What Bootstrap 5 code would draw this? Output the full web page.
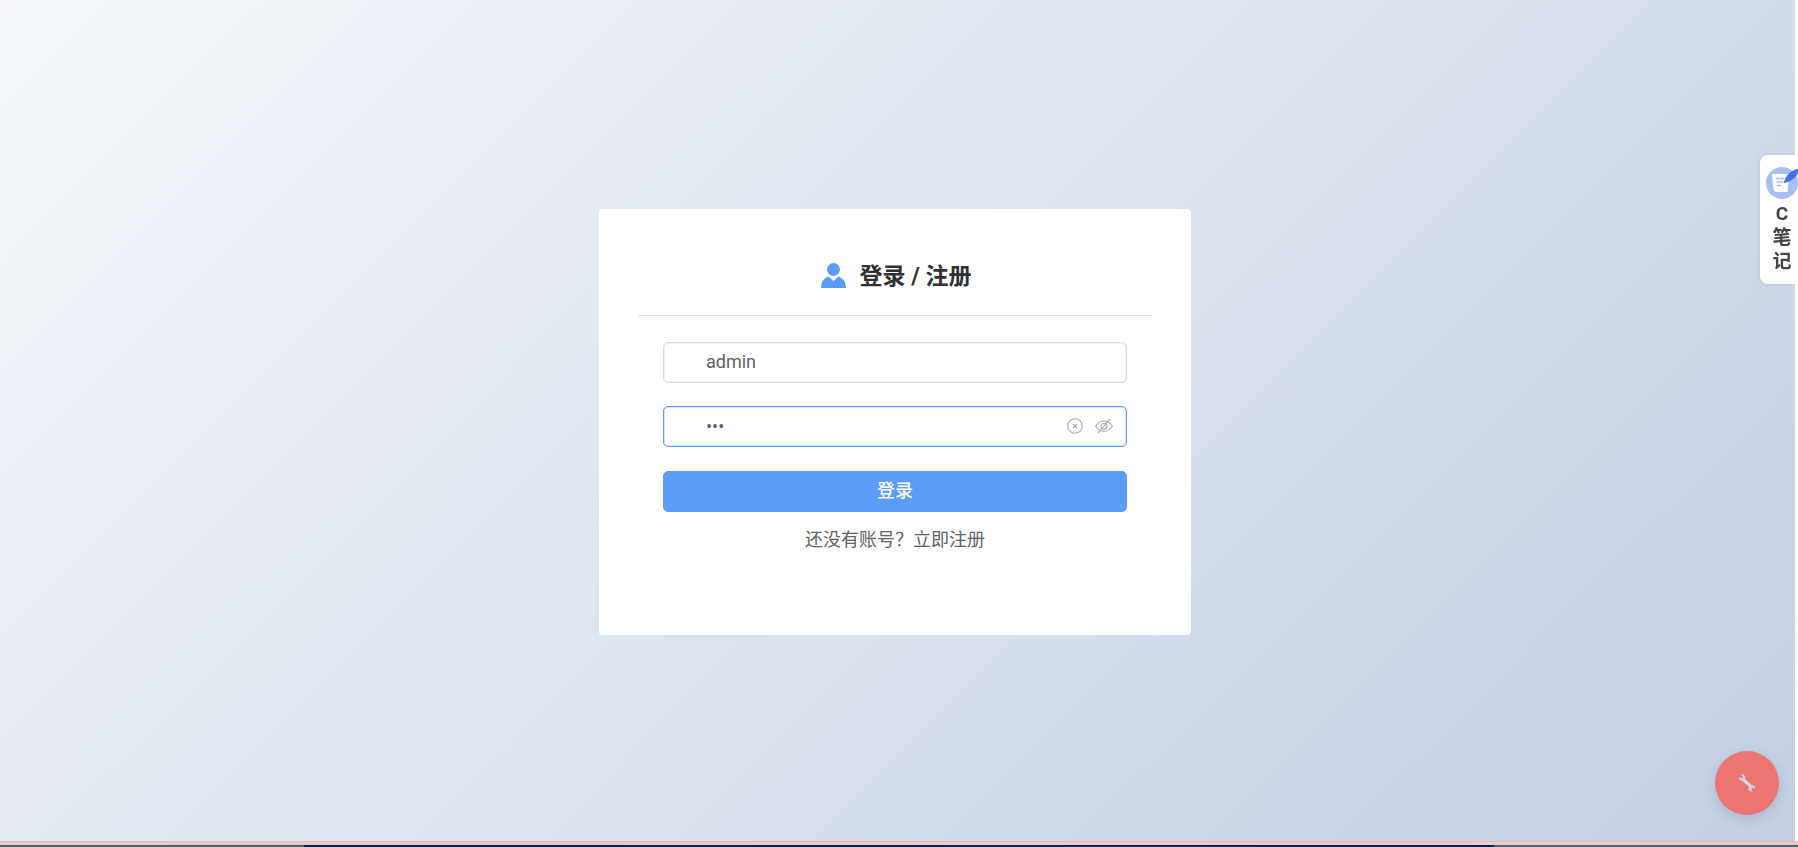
<!DOCTYPE html>
<html lang="zh-CN">
<head>
    <meta charset="UTF-8">
    <meta name="viewport" content="width=device-width, initial-scale=1.0">
    <title>登录 / 注册</title>
    <link href="https://cdn.jsdelivr.net/npm/bootstrap@5.3.0/dist/css/bootstrap.min.css" rel="stylesheet">
    <style>
        html, body {
            height: 100%;
            overflow: hidden;
        }
        body {
            font-family: Roboto, "Noto Sans CJK SC", sans-serif;
            background-color: #fff;
        }
        .page-shell {
            height: 847px;
        }
        .stage {
            height: 841px;
            margin-right: 3px;
            background: linear-gradient(135deg, #f5f7fa 0%, #c3cfe2 100%);
            padding-right: 5px;
            padding-top: 2px;
        }
        .login-box {
            width: 592px;
            height: 426px;
            border-radius: 4px;
            padding: 0 39px;
        }
        .login-title {
            gap: 14px;
            height: 107px;
            padding: 28px 0 0 2px;
            border-bottom: 1px solid #e2e3e8;
            color: #303133;
            font-size: 23px;
            font-weight: 700;
        }
        .user-icon {
            width: 25px;
            height: 25px;
        }
        .login-form {
            width: 464px;
            padding-top: 26px;
        }
        .field {
            height: 41px;
            margin-bottom: 23px;
            padding: 0 13px 0 42px;
            border: 1px solid #d9dbe3;
            border-radius: 5px;
            box-shadow: inset 0 0 0 1px rgba(220, 223, 230, .4);
        }
        .field-active {
            gap: 12px;
            margin-bottom: 24px;
            border-color: #5b9cf8;
            box-shadow: inset 0 0 0 1px rgba(91, 156, 248, .25);
        }
        .field .form-control {
            padding: 0;
            color: #606266;
            font-size: 18px;
            box-shadow: none;
            background: none;
        }
        .field .text-value {
            padding-bottom: 2px;
        }
        .clear-icon {
            flex: none;
            width: 16px;
            height: 16px;
            color: #a9a9ae;
        }
        .eye-icon {
            flex: none;
            width: 18px;
            height: 16px;
            color: #a9a9ae;
        }
        .submit-btn {
            height: 41px;
            padding: 0 0 2px;
            background-color: #5b9cf8;
            border-color: #5b9cf8;
            border-radius: 5px;
            font-size: 18px;
            font-weight: 500;
        }
        .register-link {
            margin-top: 14px;
            color: #606266;
            font-size: 18px;
            line-height: 27px;
        }
        .bottom-tint {
            height: 4px;
            background-color: #edcaca;
            border-top: 1px solid #e5b8b8;
        }
        .bottom-dark {
            height: 2px;
        }
        .dark-side {
            width: 304px;
            background-color: #565f63;
        }
        .dark-mid {
            background-color: #0e2344;
        }
        .note-tab {
            position: fixed;
            top: 155px;
            right: 0;
            width: 38px;
            height: 129px;
            padding: 12px 0 0 6px;
            border-radius: 8px 0 0 8px;
            box-shadow: 0 0 6px rgba(0, 0, 0, .08);
            color: #444;
            font-size: 19px;
            font-weight: 700;
            line-height: 24px;
            text-align: center;
        }
        .note-icon {
            display: block;
            width: 32px;
            height: 32px;
            margin-bottom: 3px;
        }
        .tool-fab {
            position: fixed;
            left: 1715px;
            top: 751px;
            width: 64px;
            height: 64px;
            background-color: #ed7571;
            box-shadow: 0 4px 12px rgba(90, 110, 150, .25);
        }
        .tool-fab svg {
            width: 18px;
            height: 18px;
        }
    </style>
</head>
<body>
    <div class="page-shell d-flex flex-column">
        <div class="stage d-flex align-items-center justify-content-center">
            <div class="login-box bg-white">
                <!-- title -->
                <div class="login-title d-flex align-items-center justify-content-center">
                    <svg class="user-icon" viewBox="0 0 25 25" fill="#5b9cf8">
                        <circle cx="12.5" cy="6.5" r="6.5"/>
                        <path d="M0 25C0 19 3 15 7.5 13.5L12.5 18L17.5 13.5C22 15 25 19 25 25Z"/>
                    </svg>
                    <span class="pt-1">登录 / 注册</span>
                </div>

                <!-- form -->
                <form class="login-form mx-auto">
                    <div class="field d-flex align-items-center">
                        <input type="text" class="form-control text-value border-0" value="admin">
                    </div>
                    <div class="field field-active d-flex align-items-center">
                        <input type="password" class="form-control border-0" value="123">
                        <svg class="clear-icon" viewBox="0 0 16 16" fill="none" stroke="currentColor" stroke-width="1.1">
                            <circle cx="8" cy="8" r="7.3"/>
                            <path d="M6 6L10 10M10 6L6 10"/>
                        </svg>
                        <svg class="eye-icon" viewBox="0 0 18 16" fill="none" stroke="currentColor" stroke-width="1.1">
                            <path d="M.6 8.2C3 4.8 6 3 9 3s6 1.8 8.4 5.2C15 11.6 12 13.4 9 13.4S3 11.6.6 8.2Z"/>
                            <circle cx="9" cy="8.2" r="3"/>
                            <path d="M15 .8L3 15.2"/>
                        </svg>
                    </div>
                    <button type="button" class="submit-btn btn btn-primary w-100">登录</button>
                    <div class="register-link text-center">还没有账号？立即注册</div>
                </form>
            </div>
        </div>
        <div class="bottom-tint"></div>
        <div class="bottom-dark d-flex">
            <div class="dark-side"></div>
            <div class="dark-mid flex-grow-1"></div>
            <div class="dark-side"></div>
        </div>
    </div>

    <!-- side note tab -->
    <div class="note-tab bg-white">
        <svg class="note-icon" viewBox="0 0 32 32">
            <circle cx="16" cy="16" r="16" fill="#a9bff2"/>
            <path d="M6 7H23L21.5 25H11C8.5 25 7.5 23 7.2 20.5Z" fill="#fff"/>
            <path d="M10 11.5H18M10.5 15H17M11 18.5H15" stroke="#a9bff2" stroke-width="1.3"/>
            <path d="M32 2C25 3 20 8 17.5 16C23 15.5 29 12 32 6Z" fill="#3f74f0"/>
        </svg>
        <div>C</div>
        <div>笔</div>
        <div>记</div>
    </div>

    <!-- tool button -->
    <div class="tool-fab rounded-circle d-flex align-items-center justify-content-center">
        <svg viewBox="0 0 18 18">
            <path d="M4.5 4.8L13.5 13.2" stroke="#d5dcf2" stroke-width="3.2"/>
            <path d="M.8 3L3.4 4.6L4.8 3L3.2.6C5.6 0 8 1.8 7.4 4.6L5 7C2.6 7.4.4 5.6.8 3Z" fill="#c9d2ee"/>
            <path d="M17.2 15L14.6 13.4L13.2 15L14.8 17.4C12.4 18 10 16.2 10.6 13.4L13 11C15.4 10.6 17.6 12.4 17.2 15Z" fill="#c9d2ee"/>
        </svg>
    </div>

    <script src="https://cdn.jsdelivr.net/npm/bootstrap@5.3.0/dist/js/bootstrap.bundle.min.js"></script>
</body>
</html>
